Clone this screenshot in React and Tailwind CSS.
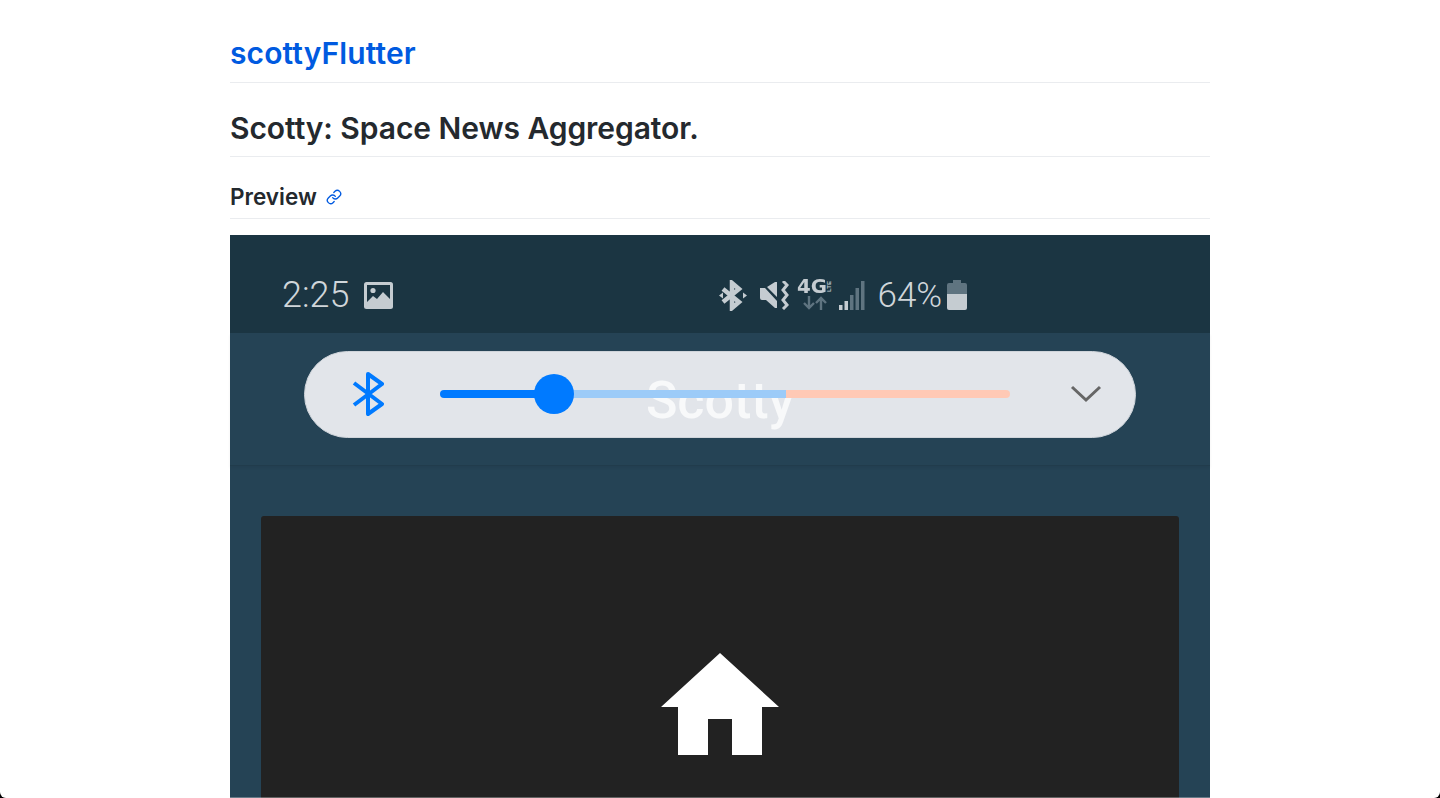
import { Link } from 'lucide-react'

function ImageIcon() {
  return (
    <svg width="29" height="27" viewBox="0 0 29 27" className="ml-[15px]">
      <rect x="0" y="0" width="29" height="27" rx="2.5" fill="#c5ccd1" />
      <rect x="3" y="3" width="23" height="21" fill="#1b3542" />
      <circle cx="9" cy="8.5" r="2.6" fill="#c5ccd1" />
      <path d="M3 20 L9 14 L13 17 L19 10 L26 17 V24 H3 Z" fill="#c5ccd1" />
    </svg>
  )
}

function StatusBluetooth() {
  return (
    <svg width="28" height="31" viewBox="0 0 28 31">
      <path d="M4 9 L20 22 L13 28 V3 L20 9 L4 22" fill="none" stroke="#c5ccd1" strokeWidth="4.5" />
      <path d="M0 15.5 L4 12.5 V18.5 Z M28 15.5 L24 12.5 V18.5 Z" fill="#c5ccd1" />
    </svg>
  )
}

function MuteIcon() {
  return (
    <svg width="29" height="29" viewBox="0 0 29 29" className="ml-[13px]">
      <path d="M0 7 H5 L17 20 V27 H15 L6 19 H2 Q0 19 0 17 Z M7 6 L15 1 H17 V16 Z" fill="#c5ccd1" />
      <path d="M23 0 L27 4 L23 9 L27 14 L23 19 L27 24 L23 28" fill="none" stroke="#c5ccd1" strokeWidth="3" />
    </svg>
  )
}

function NetworkIcon() {
  return (
    <div className="relative w-[36px] h-[32px] ml-[8px]">
      <span className="absolute left-0 top-[-2px] origin-left scale-x-[1.04] text-[19px] leading-[19px] font-bold text-[#c5ccd1] [font-family:'DejaVu_Sans',sans-serif]">
        4G
      </span>
      <span className="absolute left-[29px] top-[13px] text-[6px] leading-[7px] font-bold text-[#c5ccd1] origin-top-left rotate-[-90deg] [font-family:'Liberation_Sans',sans-serif]">
        LTE
      </span>
      <svg width="24" height="14" viewBox="0 0 24 14" className="absolute left-[6px] top-[17px]">
        <path d="M6 0 V11 M1 7 L6 12 L11 7" fill="none" stroke="#5f7480" strokeWidth="2.4" />
        <path d="M18 14 V2 M13 7 L18 2 L23 7" fill="none" stroke="#5f7480" strokeWidth="2.4" />
      </svg>
    </div>
  )
}

function SignalIcon() {
  return (
    <svg width="26" height="29" viewBox="0 0 26 29" className="ml-[6px]">
      <rect x="0" y="24" width="3.5" height="5" fill="#c5ccd1" />
      <rect x="5.5" y="20" width="3.5" height="9" fill="#c5ccd1" />
      <rect x="11" y="14" width="3.5" height="15" fill="#5f7480" />
      <rect x="16.5" y="7" width="3.5" height="22" fill="#5f7480" />
      <rect x="22" y="0" width="3.5" height="29" fill="#5f7480" />
    </svg>
  )
}

function BatteryIcon() {
  return (
    <svg width="20" height="30" viewBox="0 0 20 30" className="ml-[5px]">
      <path d="M6 0 H14 V3 H18 Q20 3 20 5 V14 H0 V5 Q0 3 2 3 H6 Z" fill="#5f7480" />
      <path d="M0 14 H20 V28 Q20 30 18 30 H2 Q0 30 0 28 Z" fill="#c5ccd1" />
    </svg>
  )
}

function PillBluetooth() {
  return (
    <svg width="32" height="44" viewBox="0 0 32 44" className="ml-[47px] relative">
      <path d="M2 11 L30 32 L16 42 V2 L30 12 L2 33" fill="none" stroke="#007aff" strokeWidth="4" strokeLinejoin="round" />
    </svg>
  )
}

function VolumeSlider() {
  return (
    <div className="relative flex w-[570px] h-[8px] ml-[56px]">
      <div className="w-[114px] bg-[#007aff] rounded-l-full" />
      <div className="w-[232px] bg-[#9ccbf8]" />
      <div className="flex-1 bg-[#ffc9b5] rounded-r-full" />
      <div className="absolute left-[94px] top-[-16px] w-[40px] h-[40px] rounded-full bg-[#007aff]" />
    </div>
  )
}

function Phone() {
  return (
    <div className="mt-4 bg-[#254355]">
      <div className="h-[98px] bg-[#1b3542] flex items-center pl-[52px] pt-[22px] text-[#d0d6da]">
        <span className="text-[36px] font-light leading-none [font-family:Roboto,sans-serif]">2:25</span>
        <ImageIcon />
        <div className="ml-[326px] flex items-center">
          <StatusBluetooth />
          <MuteIcon />
          <NetworkIcon />
          <SignalIcon />
          <span className="ml-[12px] text-[35px] font-light leading-none [font-family:Roboto,sans-serif]">64%</span>
          <BatteryIcon />
        </div>
      </div>

      <div className="h-[133px] pt-[18px] px-[74px] border-b border-[#213c4c] shadow-[0_2px_3px_rgba(0,0,0,0.06)]">
        <div className="relative w-[832px] h-[87px] pb-[2px] rounded-full bg-[#e2e5ea] border border-[#cfd4da] flex items-center">
          <span className="absolute left-0 right-0 top-[13px] text-center text-[52px] leading-[72px] font-medium text-[#f8f9fa] blur-[0.4px] [font-family:Roboto,sans-serif]">
            Scotty
          </span>
          <PillBluetooth />
          <VolumeSlider />
          <svg width="32" height="18" viewBox="0 0 32 18" className="ml-[60px] relative">
            <path d="M2 2 L16 15 L30 2" fill="none" stroke="#666666" strokeWidth="3" />
          </svg>
        </div>
      </div>

      <div className="pt-[50px] px-[31px]">
        <div className="h-[400px] bg-[#222222] rounded-t-[3px] flex justify-center pt-[137px]">
          <svg width="120" height="103" viewBox="0 0 120 103">
            <path d="M60 0 L119 54 H102 V102 H72 V66 H48 V102 H18 V54 H1 Z" fill="#ffffff" />
          </svg>
        </div>
      </div>
    </div>
  )
}

export default function App() {
  return (
    <div className="h-[798px] bg-black overflow-hidden">
      <div className="relative h-full bg-white rounded-b-[6px] overflow-hidden [font-family:Inter,sans-serif]">
        <div className="w-[980px] mx-auto pt-[32px]">
          <header className="h-[51px] border-b border-[#eaecef]">
            <a className="block text-[30px] leading-[42px] font-semibold text-[#005ae0] tracking-[0.12px]">scottyFlutter</a>
          </header>
          <h1 className="mt-[23px] pb-[6px] text-[30px] leading-[44px] font-semibold text-[#24292e] tracking-[-0.07px] border-b border-[#eaecef]">
            Scotty: Space News Aggregator.
          </h1>
          <h2 className="mt-[25px] pb-[6px] flex items-center text-[22.5px] leading-[30px] font-semibold text-[#24292e] border-b border-[#eaecef]">
            Preview
            <Link size={16} className="ml-[9px] text-[#005ae0]" />
          </h2>
          <Phone />
        </div>
        <div className="absolute bottom-0 inset-x-0 h-px bg-white/30" />
      </div>
    </div>
  )
}
